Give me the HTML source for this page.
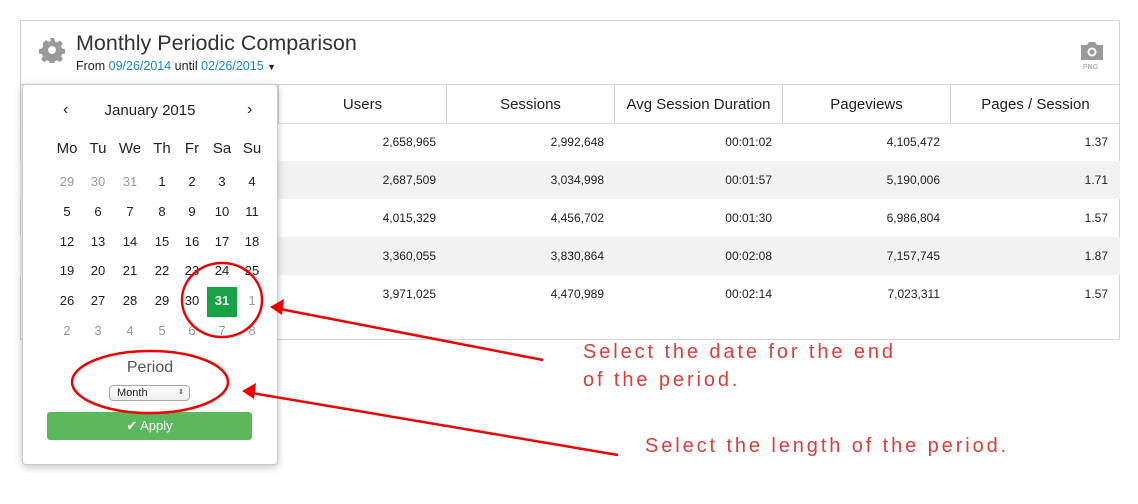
<!DOCTYPE html>
<html><head><meta charset="utf-8"><style>
*{margin:0;padding:0;box-sizing:border-box}
body{width:1138px;height:504px;background:#fff;position:relative;font-family:"Liberation Sans",sans-serif;color:#222;overflow:hidden}
.a{position:absolute}
.card{left:20px;top:20px;width:1100px;height:320px;border:1px solid #d4d4d4}
.hdr{left:20px;top:84px;width:1100px;height:1px;background:#d4d4d4}
.th{top:85px;height:38px;line-height:40px;text-align:center;font-size:15px;border-left:1px solid #d4d4d4}
.line{left:20px;width:1100px;height:1px;background:#ddd}
.row{left:20px;width:1100px;height:38px}
.td{height:38px;line-height:39px;text-align:right;font-size:12px;padding-right:10px;width:168px}
.pop{left:22px;top:84px;width:256px;height:381px;background:#fff;border:1px solid #ccc;border-radius:4px;box-shadow:0 2px 8px rgba(0,0,0,.25)}
.d{position:absolute;width:30px;height:30px;line-height:30px;text-align:center;font-size:13px}
.g{color:#999}
.note{color:#e03a3a;font-size:20px;letter-spacing:2.9px}
</style></head><body>
<div class="a card"></div>
<svg class="a" style="left:39px;top:37px" width="26" height="26" viewBox="0 0 24 24"><path fill="#999" d="M10 1h4l.6 3 2 .9 2.6-1.7 2.8 2.8-1.7 2.6.9 2 3 .6v4l-3 .6-.9 2 1.7 2.6-2.8 2.8-2.6-1.7-2 .9-.6 3h-4l-.6-3-2-.9-2.6 1.7-2.8-2.8 1.7-2.6-.9-2-3-.6v-4l3-.6.9-2L3.6 5.6 6.4 2.8 9 4.5l2-.9z"/><circle cx="12" cy="12" r="3.6" fill="#fff"/></svg>
<div class="a" style="left:76px;top:31px;font-size:21.5px;color:#333">Monthly Periodic Comparison</div>
<div class="a" style="left:76px;top:59px;font-size:12.5px">From <span style="color:#1a8ac6">09/26/2014</span> until <span style="color:#1a8ac6">02/26/2015</span> <span style="font-size:9px">▼</span></div>
<svg class="a" style="left:1079px;top:40px" width="26" height="22" viewBox="0 0 26 22"><path fill="#999" d="M2 5h6l2-3h6l2 3h6v15H2z"/><circle cx="13" cy="12" r="4.5" fill="#fff"/><circle cx="13" cy="12" r="2.6" fill="#999"/></svg>
<div class="a" style="left:1083px;top:64px;font-size:7px;color:#999">PNG</div>
<div class="a hdr"></div>
<div class="a th" style="left:278px;width:168px">Users</div>
<div class="a th" style="left:446px;width:168px">Sessions</div>
<div class="a th" style="left:614px;width:168px">Avg Session Duration</div>
<div class="a th" style="left:782px;width:168px">Pageviews</div>
<div class="a th" style="left:950px;width:170px">Pages / Session</div>
<div class="a line" style="top:123px"></div>
<div class="a row" style="top:161px;background:#f2f2f2"></div>
<div class="a row" style="top:237px;background:#f2f2f2"></div>
<div class="a" style="left:278px;top:123px">
<div style="display:flex"><div class="td">2,658,965</div><div class="td">2,992,648</div><div class="td">00:01:02</div><div class="td">4,105,472</div><div class="td">1.37</div></div>
<div style="display:flex"><div class="td">2,687,509</div><div class="td">3,034,998</div><div class="td">00:01:57</div><div class="td">5,190,006</div><div class="td">1.71</div></div>
<div style="display:flex"><div class="td">4,015,329</div><div class="td">4,456,702</div><div class="td">00:01:30</div><div class="td">6,986,804</div><div class="td">1.57</div></div>
<div style="display:flex"><div class="td">3,360,055</div><div class="td">3,830,864</div><div class="td">00:02:08</div><div class="td">7,157,745</div><div class="td">1.87</div></div>
<div style="display:flex"><div class="td">3,971,025</div><div class="td">4,470,989</div><div class="td">00:02:14</div><div class="td">7,023,311</div><div class="td">1.57</div></div>
</div>
<div class="a pop"></div>
<div class="a" style="left:63px;top:101px;font-size:16px">‹</div>
<div class="a" style="left:247px;top:101px;font-size:16px">›</div>
<div class="a" style="left:22px;top:102px;width:256px;text-align:center;font-size:15px">January 2015</div>
<div class="a" style="left:207px;top:287px;width:30px;height:30px;background:#17a345"></div>
<div id="cal"></div>
<div class="a" style="left:22px;top:359px;width:256px;text-align:center;font-size:16px;color:#555">Period</div>
<div class="a" style="left:109px;top:385px;width:81px;height:16px;border:1px solid #aaa;border-radius:4px;background:linear-gradient(#fff,#eee);font-size:11px;line-height:14px;padding-left:7px">Month<span style="position:absolute;right:5px;top:0;font-size:7px">⇕</span></div>
<div class="a" style="left:47px;top:412px;width:205px;height:28px;background:#5cb85c;border-radius:3px;color:#fff;font-size:13px;text-align:center;line-height:28px">✔ Apply</div>
<script>
var xs=[67,98,130,162,192,222,252],ys=[149,182,212,242,271,301,331];
var rows=[["Mo","Tu","We","Th","Fr","Sa","Su"],["29","30","31","1","2","3","4"],["5","6","7","8","9","10","11"],["12","13","14","15","16","17","18"],["19","20","21","22","23","24","25"],["26","27","28","29","30","31","1"],["2","3","4","5","6","7","8"]];
var h="";
rows.forEach(function(r,i){r.forEach(function(t,j){var g=(i==1&&j<3)||(i==5&&j==6)||i==6;var s="left:"+(xs[j]-15)+"px;top:"+(ys[i]-15)+"px;";if(i==0)s+="font-size:15px;";if(i==5&&j==5)s+="color:#fff;font-weight:bold;";h+='<div class="d'+(g?' g':'')+'" style="'+s+'">'+t+'</div>';});});
document.getElementById("cal").innerHTML=h;
</script>
<svg class="a" style="left:0;top:0" width="1138" height="504">
<g fill="none" stroke="#e00" stroke-width="2.5">
<ellipse cx="222" cy="300" rx="40" ry="37"/>
<ellipse cx="150" cy="382" rx="78" ry="31"/>
<line x1="543" y1="360" x2="280" y2="309"/>
<line x1="618" y1="455" x2="252" y2="393"/>
</g>
<path fill="#e00" d="M270 307l14-8-2 16z"/>
<path fill="#e00" d="M242 391l14-8-2 16z"/>
</svg>
<div class="a note" style="left:583px;top:341px">Select the date for the end</div>
<div class="a note" style="left:583px;top:369px">of the period.</div>
<div class="a note" style="left:645px;top:435px">Select the length of the period.</div>
</body></html>
